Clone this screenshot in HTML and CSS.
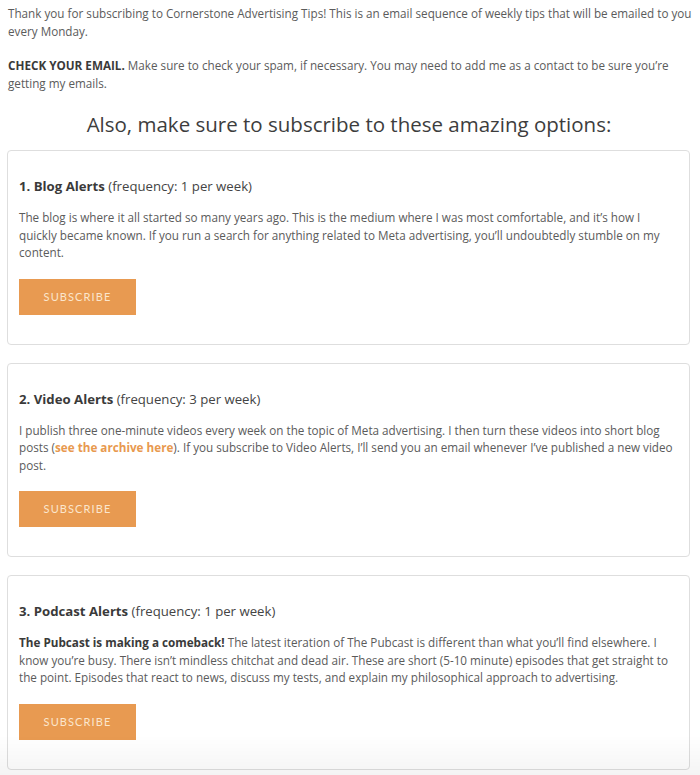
FILE: index.html
```html
<!DOCTYPE html>
<html lang="en">
<head>
<meta charset="utf-8">
<title>Thank you</title>
<link rel="stylesheet" href="styles.css">
</head>
<body>
<main class="page">
  <p class="intro">Thank you for subscribing to Cornerstone Advertising Tips! This is an email sequence of weekly tips that will be emailed to you every Monday.</p>
  <p class="intro"><strong>CHECK YOUR EMAIL.</strong> Make sure to check your spam, if necessary. You may need to add me as a contact to be sure you’re getting my emails.</p>
  <h2 class="heading">Also, make sure to subscribe to these amazing options:</h2>

  <section class="card">
    <h3 class="card-title"><strong>1. Blog Alerts</strong> (frequency: 1 per week)</h3>
    <p class="card-text">The blog is where it all started so many years ago. This is the medium where I was most comfortable, and it’s how I quickly became known. If you run a search for anything related to Meta advertising, you’ll undoubtedly stumble on my content.</p>
    <a class="btn" href="#">SUBSCRIBE</a>
  </section>

  <section class="card">
    <h3 class="card-title"><strong>2. Video Alerts</strong> (frequency: 3 per week)</h3>
    <p class="card-text">I publish three one-minute videos every week on the topic of Meta advertising. I then turn these videos into short blog posts (<a class="link" href="#">see the archive here</a>). If you subscribe to Video Alerts, I’ll send you an email whenever I’ve published a new video post.</p>
    <a class="btn" href="#">SUBSCRIBE</a>
  </section>

  <section class="card">
    <h3 class="card-title"><strong>3. Podcast Alerts</strong> (frequency: 1 per week)</h3>
    <p class="card-text"><strong>The Pubcast is making a comeback!</strong> The latest iteration of The Pubcast is different than what you’ll find elsewhere. I know you’re busy. There isn’t mindless chitchat and dead air. These are short (5-10 minute) episodes that get straight to the point. Episodes that react to news, discuss my tests, and explain my philosophical approach to advertising.</p>
    <a class="btn" href="#">SUBSCRIBE</a>
  </section>
</main>
<div class="fade"></div>
</body>
</html>
```

FILE: styles.css
```css
html {
  background: #ffffff;
}
body {
  margin: 0;
  font-family: "Open Sans", "Liberation Sans", sans-serif;
  font-size: 11.7px;
  line-height: 17.5px;
  color: #5b5b5b;
}
.page {
  padding: 5px 10px 20px 8px;
  display: flex;
  flex-direction: column;
}
.intro {
  margin: 0 -4px 17px 0;
}
.intro strong {
  color: #3a3a3a;
  font-weight: 700;
}
.heading {
  margin: 2px 0 13px 0;
  text-align: center;
  font-weight: 400;
  font-size: 20.5px;
  line-height: 26px;
  color: #3d3d3d;
}
.card {
  border: 1px solid #dedede;
  border-radius: 4px;
  padding: 27px 11px 29px 11px;
  margin: 0 0 18px -1px;
  background: #fff;
}
.card-title {
  margin: 0 0 14px 0;
  font-size: 13.2px;
  line-height: 17px;
  font-weight: 400;
  color: #444;
}
.card-title strong {
  font-weight: 700;
  color: #3a3a3a;
}
.card-text {
  margin: 0 0 17px 0;
}
.card-text strong {
  font-weight: 700;
  color: #3a3a3a;
}
.link {
  color: #e8994f;
  font-weight: 700;
  text-decoration: none;
}
.btn {
  display: flex;
  align-items: center;
  justify-content: center;
  width: 117px;
  height: 36px;
  background: #e89a51;
  color: #fbe6cd;
  font-family: "Lato", "DejaVu Sans", sans-serif;
  font-size: 11px;
  letter-spacing: 1.1px;
  text-decoration: none;
  box-sizing: border-box;
}
.fade {
  position: fixed;
  left: 0;
  right: 0;
  bottom: 0;
  height: 40px;
  background: linear-gradient(to bottom, rgba(0,0,0,0), rgba(0,0,0,0.045));
  pointer-events: none;
}
```
